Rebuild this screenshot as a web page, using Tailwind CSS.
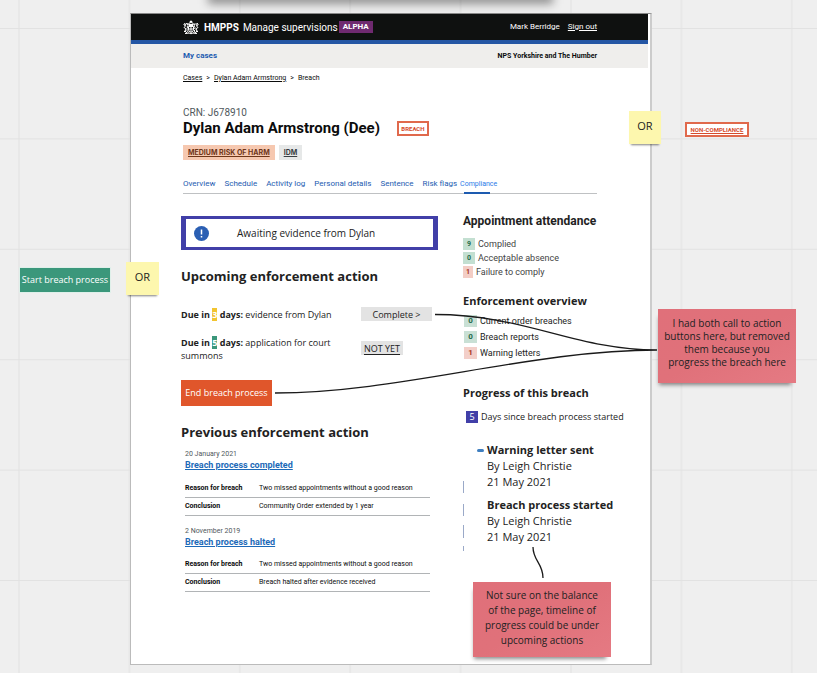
<!DOCTYPE html>
<html lang="en">
<head>
<meta charset="utf-8">
<title>Manage supervisions – breach page</title>
<script src="https://cdn.jsdelivr.net/npm/@tailwindcss/browser@4"></script>
</head>
<body class="bg-[#efefef] font-['Open_Sans','Noto_Sans',sans-serif] text-[#222]">
<div class="relative min-h-screen overflow-hidden pt-[13px] pl-[130px] pb-[7px]">

  <!-- board grid -->
  <svg class="absolute inset-0 w-full h-full" aria-hidden="true">
    <defs>
      <pattern id="grid" x="18" y="28" width="110.4" height="110.4" patternUnits="userSpaceOnUse">
        <path d="M1 0V111M0 .5H111" stroke="#e2e2e2" stroke-width="1" fill="none"/>
      </pattern>
    </defs>
    <rect width="100%" height="100%" fill="url(#grid)"/>
  </svg>
  <div class="absolute -top-2 left-[208px] w-[345px] h-3 bg-black/40 blur-[5px]"></div>

  <!-- design frame -->
  <article class="relative max-w-[522px] bg-white border border-t-[#888] border-l-[#bbb] border-b-[#bbb] border-r-2 border-r-[#ccc] pb-[72px]">
    <div class="font-[Roboto,sans-serif] text-[#0b0c0c]">
      <header class="mr-0.5 h-[30px] bg-[#0f1110] border-b-4 border-[#2456a4] pl-[52px] pr-[51px] flex items-center text-white">
        <svg class="w-4 h-[15px] mr-[5px]" viewBox="0 0 32 30" fill="none" stroke="#fff" stroke-width="2" aria-hidden="true">
          <path d="M16 1v4M13.500 3h5M11 9q0-4 5-4t5 4zM12 11h8"/>
          <path d="M11 13h10v6q0 4-5 6q-5-2-5-6zM11 18h10M16 13v11"/>
          <path d="M9 26q-5-1-5-6l3-2-5-3 3-3-2-5 3 2 2-3 2 5-2 3 3 4-3 3 3 4M2 24l3-3M1 9l3 2"/>
          <path d="M23 26q5-1 5-6l-3-2 5-3-3-3 2-6-3 3-2-2-2 5 2 3-3 4 3 3-3 4M30 24l-3-3M31 9l-3 2"/>
          <path d="M4 27q6 0 8-1 4 3 8 0 3 1 8 1"/>
        </svg>
        <span class="font-bold text-[10px]">HMPPS</span>
        <span class="text-[10px] ml-1">Manage supervisions</span>
        <span class="ml-px px-1 h-3 leading-3 bg-[#6f2a70] text-[8px] font-bold">ALPHA</span>
        <span class="ml-auto text-[8px]">Mark Berridge</span>
        <a href="#" class="ml-2 text-[8px] underline">Sign out</a>
      </header>
      <nav class="mr-0.5 h-6 bg-[#efeeec] pl-[52px] pr-[51px] flex items-center justify-between font-bold">
        <a href="#" class="text-[8px] text-[#1d5bb0]">My cases</a>
        <span class="text-[7px]">NPS Yorkshire and The Humber</span>
      </nav>
      <div class="pl-[52px] pr-[53px]">
        <nav class="h-5 flex items-center gap-1 text-[7px]" aria-label="Breadcrumb">
          <a href="#" class="underline">Cases</a><span>&gt;</span>
          <a href="#" class="underline">Dylan Adam Armstrong</a><span>&gt;</span>
          <span>Breach</span>
        </nav>
        <p class="mt-[18px] text-[10px] leading-[14px] text-[#50585c]">CRN: J678910</p>
        <div class="flex items-center h-[17px] gap-[17px]">
          <h1 class="font-bold text-[15px] leading-[17px]">Dylan Adam Armstrong (Dee)</h1>
          <span class="w-8 h-[15px] border-2 border-[#e0694c] text-[#d64a2b] text-[6px] leading-[11px] font-bold text-center">BREACH</span>
        </div>
        <div class="mt-2 flex gap-1 font-[Inter,sans-serif] text-[7px] leading-[15px] font-bold">
          <a href="#" class="px-[5px] bg-[#f6c8b0] text-[#6e3619] underline underline-offset-1">MEDIUM RISK OF HARM</a>
          <a href="#" class="px-[5px] bg-[#e6e8e8] text-[#383f43] underline underline-offset-1">IDM</a>
        </div>
        <nav class="mt-4 h-[18px] border-b border-[#bfc1c3] flex items-start gap-[9px] text-[8px] leading-4 text-[#1d5bb0]" aria-label="Case">
          <a href="#">Overview</a><a href="#">Schedule</a><a href="#">Activity log</a><a href="#">Personal details</a><a href="#">Sentence</a>
          <a href="#">Risk flags</a>
          <a href="#" aria-current="page" class="-ml-1.5 h-[18px] text-[7px] text-[#2a7be8] relative after:absolute after:left-1 after:w-[26px] after:bottom-0 after:h-0.5 after:bg-[#1d5bb0]">Compliance</a>
        </nav>
      </div>
    </div>

    <div class="grid grid-cols-[257px_1fr] gap-x-[25px] pl-[50px] pt-[22px]">
      <div>
        <div class="h-[34px] border-x-[5px] border-y-[3px] border-[#413fa8] flex items-center pl-2">
          <svg class="w-[15px] h-[15px]" viewBox="0 0 15 15" aria-hidden="true"><circle cx="7.500" cy="7.500" r="7.500" fill="#2b5fb3"/><path d="M7.500 3.500v5M7.500 10v1.500" stroke="#fff" stroke-width="1.500"/></svg>
          <p class="ml-7 text-[10px] leading-4">Awaiting evidence from Dylan</p>
        </div>
        <h2 class="mt-[17px] text-[13px] leading-[18px] font-bold">Upcoming enforcement action</h2>
        <div class="mt-[22px] grid grid-cols-[180px_1fr] gap-y-[14px] text-[9px] leading-[13px]">
          <p class="pt-px"><b>Due in <span class="bg-[#f2c430] text-white">3</span> days:</b> evidence from Dylan</p>
          <button class="w-[71px] h-[14px] bg-[#e3e3e3] leading-[13px]">Complete &gt;</button>
          <p class="pt-px"><b>Due in <span class="bg-[#3b977b] text-white">5</span> days:</b> application for court<br>summons</p>
          <button class="mt-[6px] w-[42px] h-[14px] bg-[#e3e3e3] leading-[13px] underline underline-offset-2">NOT YET</button>
        </div>
        <button class="mt-[18px] w-[91px] h-[26px] bg-[#e0562b] text-white text-[9px]">End breach process</button>
        <h2 class="mt-[17px] text-[13px] leading-[18px] font-bold">Previous enforcement action</h2>

        <div class="pl-1 pr-2 pt-2 font-[Roboto,sans-serif] text-[7px] text-[#0b0c0c]">
          <section>
            <p class="leading-[10px] text-[#50585c]">20 January 2021</p>
            <h3 class="text-[9px] leading-3 font-bold"><a href="#" class="text-[#1d6ab8] underline">Breach process completed</a></h3>
            <table class="mt-2 w-full text-left">
              <tr class="h-[18px] border-b border-[#b1b4b6]"><th class="w-[74px]">Reason for breach</th><td>Two missed appointments without a good reason</td></tr>
              <tr class="h-[18px] border-b border-[#b1b4b6]"><th>Conclusion</th><td>Community Order extended by 1 year</td></tr>
            </table>
          </section>
          <section class="mt-[10px]">
            <p class="leading-[10px] text-[#50585c]">2 November 2019</p>
            <h3 class="text-[9px] leading-3 font-bold"><a href="#" class="text-[#1d6ab8] underline">Breach process halted</a></h3>
            <table class="mt-2 w-full text-left">
              <tr class="h-[18px] border-b border-[#b1b4b6]"><th class="w-[74px]">Reason for breach</th><td>Two missed appointments without a good reason</td></tr>
              <tr class="h-[18px] border-b border-[#b1b4b6]"><th>Conclusion</th><td>Breach halted after evidence received</td></tr>
            </table>
          </section>
        </div>
      </div>

      <div>
        <section class="font-[Roboto,sans-serif]">
          <h2 class="-mt-[3px] text-[12px] leading-4 font-bold">Appointment attendance</h2>
          <ul class="mt-[9px] text-[9px] leading-3 text-[#444] space-y-0.5">
            <li class="flex gap-[3px]"><span class="w-3 bg-[#c3dfd1] text-[#1f6b4a] text-[7px] font-bold text-center">9</span>Complied</li>
            <li class="flex gap-[3px]"><span class="w-3 bg-[#c3dfd1] text-[#1f6b4a] text-[7px] font-bold text-center">0</span>Acceptable absence</li>
            <li class="flex gap-[3px]"><span class="w-[10px] bg-[#f3cdc5] text-[#a8331c] text-[7px] font-bold text-center">1</span>Failure to comply</li>
          </ul>
        </section>
        <section class="mt-[15px]">
          <h2 class="text-[11px] leading-4 font-bold">Enforcement overview</h2>
          <ul class="mt-[6px] pl-px text-[9px] leading-3 font-[Roboto,sans-serif] space-y-1">
            <li class="flex gap-[3px]"><span class="w-[13px] bg-[#c9e0d5] text-[#1f6b4a] text-[8px] font-bold text-center">0</span>Current order breaches</li>
            <li class="flex gap-[3px]"><span class="w-[13px] bg-[#c9e0d5] text-[#1f6b4a] text-[8px] font-bold text-center">0</span>Breach reports</li>
            <li class="flex gap-[3px]"><span class="w-[13px] bg-[#f3cfc9] text-[#a8331c] text-[8px] font-bold text-center">1</span>Warning letters</li>
          </ul>
        </section>
        <section class="mt-[26px]">
          <h2 class="text-[11px] leading-4 font-bold">Progress of this breach</h2>
          <p class="mt-[10px] pl-[3px] flex gap-[3px] text-[9px] leading-3"><span class="w-3 bg-[#413fa8] text-white text-center">5</span>Days since breach process started</p>
          <ol class="mt-[19px] pl-6 text-[11px] leading-4 relative before:absolute before:left-[14px] before:top-[7px] before:w-[7px] before:h-[3px] before:rounded-full before:bg-[#3f7fc0]">
            <li><b>Warning letter sent</b><br>By Leigh Christie<br>21 May 2021</li>
            <li class="mt-[7px]"><b>Breach process started</b><br>By Leigh Christie<br>21 May 2021</li>
          </ol>
        </section>
      </div>
    </div>
  </article>

  <!-- connectors -->
  <svg class="absolute top-0 left-0 w-[817px] h-[673px] pointer-events-none" fill="none" aria-hidden="true">
    <path d="M435 314.500C525 314.500 575 350 657 350M275 393C400 393 530 350 657 350M533 547C533 561 543 563 543 578" stroke="#1a1a1a" stroke-width="1.300"/>
    <path d="M463.500 481v12M463.500 504v12M463.500 525v13M463.500 546v5" stroke="#9aa9c8"/>
  </svg>

  <!-- items placed freely on the board -->
  <button class="absolute left-[19px] top-[267px] w-[92px] h-[26px] bg-[#3b977b] border border-[#dff0ea] text-white text-[9px]">Start breach process</button>
  <div class="absolute left-[126px] top-[262px] w-[33px] h-[33px] bg-[#fdf7ae] text-[11px] leading-[30px] text-center shadow-[0_3px_2px_-2px_rgba(0,0,0,0.5)]">OR</div>
  <div class="absolute left-[629px] top-[111px] w-8 h-[33px] bg-[#fdf7ae] text-[11px] leading-[30px] text-center shadow-[0_3px_2px_-2px_rgba(0,0,0,0.5)]">OR</div>
  <a href="#" class="absolute left-[685px] top-[122px] w-16 h-[15px] bg-white border-2 border-[#e0694c] text-[#d64a2b] font-[Roboto,sans-serif] text-[6px] leading-[11px] font-bold text-center underline">NON-COMPLIANCE</a>
  <div class="absolute left-[658px] top-[309px] w-[138px] h-[74px] bg-linear-to-br from-[#e0707a] via-[#e0717a] to-[#e57a83] px-1 pt-2 text-[10px] leading-[13px] text-center shadow-[-2px_5px_4px_-3px_rgba(0,0,0,0.45)]">I had both call to action<br>buttons here, but removed<br>them because you<br>progress the breach here</div>
  <div class="absolute left-[473px] top-[582px] w-[138px] h-[75px] bg-linear-to-br from-[#e0707a] via-[#e0717a] to-[#e57a83] px-1 pt-[6px] text-[10px] leading-[15px] text-center shadow-[-2px_5px_4px_-3px_rgba(0,0,0,0.45)]">Not sure on the balance<br>of the page, timeline of<br>progress could be under<br>upcoming actions</div>
</div>
</body>
</html>
